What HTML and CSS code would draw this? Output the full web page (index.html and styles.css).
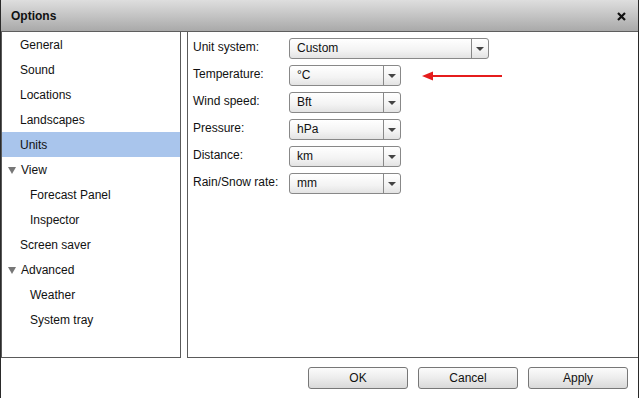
FILE: index.html
```html
<!DOCTYPE html>
<html lang="en">
<head>
    <meta charset="UTF-8">
    <meta name="viewport" content="width=device-width, initial-scale=1.0">
    <title>Options</title>
    <link rel="stylesheet" href="styles.css">
</head>
<body>
    <div class="window">
        <div class="titlebar">
            <span class="title">Options</span>
            <span class="close">
                <svg width="9" height="9" viewBox="0 0 9 9"><path d="M1 1L8 8M8 1L1 8" stroke="#111" stroke-width="2.2"/></svg>
            </span>
        </div>
        <div class="main">
            <div class="nav">
                <div class="nav-item">General</div>
                <div class="nav-item">Sound</div>
                <div class="nav-item">Locations</div>
                <div class="nav-item">Landscapes</div>
                <div class="nav-item selected">Units</div>
                <div class="nav-item group"><span class="tri"></span>View</div>
                <div class="nav-item sub">Forecast Panel</div>
                <div class="nav-item sub">Inspector</div>
                <div class="nav-item">Screen saver</div>
                <div class="nav-item group"><span class="tri"></span>Advanced</div>
                <div class="nav-item sub">Weather</div>
                <div class="nav-item sub">System tray</div>
            </div>
            <div class="content">
                <div class="row">
                    <label>Unit system:</label>
                    <div class="combo wide"><span class="value">Custom</span><span class="drop"></span></div>
                </div>
                <div class="row">
                    <label>Temperature:</label>
                    <div class="combo"><span class="value">°C</span><span class="drop"></span></div>
                    <svg class="pointer" width="82" height="10" viewBox="0 0 82 10">
                        <path d="M0 5L11 0.5V9.5Z" fill="#e51c1c"/>
                        <path d="M10 5H80" stroke="#e51c1c" stroke-width="2"/>
                    </svg>
                </div>
                <div class="row">
                    <label>Wind speed:</label>
                    <div class="combo"><span class="value">Bft</span><span class="drop"></span></div>
                </div>
                <div class="row">
                    <label>Pressure:</label>
                    <div class="combo"><span class="value">hPa</span><span class="drop"></span></div>
                </div>
                <div class="row">
                    <label>Distance:</label>
                    <div class="combo"><span class="value">km</span><span class="drop"></span></div>
                </div>
                <div class="row">
                    <label>Rain/Snow rate:</label>
                    <div class="combo"><span class="value">mm</span><span class="drop"></span></div>
                </div>
            </div>
        </div>
        <div class="footer">
            <button>OK</button>
            <button>Cancel</button>
            <button>Apply</button>
        </div>
    </div>
</body>
</html>
```

FILE: styles.css
```css
body {
    margin: 0;
    font-family: "Liberation Sans", Arial, sans-serif;
    font-size: 12px;
    color: #111;
    background-color: #ffffff;
}
.window {
    width: 637px;
    height: 398px;
    border-left: 1px solid #2a2a2a;
    border-right: 1px solid #2a2a2a;
    background-color: #ffffff;
    display: flex;
    flex-direction: column;
}
.titlebar {
    height: 31px;
    border-bottom: 1px solid #5e5e5e;
    background: linear-gradient(#dedede, #c4c4c4 50%, #a9a9a9);
    display: flex;
    align-items: center;
    justify-content: space-between;
    padding: 0 12px 0 10px;
}
.title {
    font-weight: bold;
    font-size: 12px;
    color: #111;
}
.close {
    display: flex;
    margin-top: 1px;
}
.main {
    display: flex;
    gap: 6px;
    height: 326px;
}
.nav {
    width: 178px;
    border: 1px solid #5a5a5a;
    border-top: none;
}
.nav-item {
    height: 25px;
    line-height: 24px;
    padding-left: 18px;
    display: flex;
    align-items: center;
}
.nav-item.selected {
    background-color: #a9c5ec;
}
.nav-item.sub {
    padding-left: 28px;
}
.nav-item.group {
    padding-left: 6px;
}
.tri {
    width: 0;
    height: 0;
    border-left: 4px solid transparent;
    border-right: 4px solid transparent;
    border-top: 7px solid #777;
    margin-right: 5px;
    margin-top: 1px;
}
.content {
    flex: 1;
    border-left: 1px solid #5a5a5a;
    border-bottom: 1px solid #5a5a5a;
    padding: 6px 0 0 5px;
}
.row {
    display: flex;
    align-items: flex-start;
    height: 27px;
}
.row label {
    width: 96px;
    line-height: 19px;
}
.combo {
    width: 110px;
    height: 19px;
    border: 1px solid #888;
    border-radius: 3px;
    background: linear-gradient(#ffffff, #f3f3f3 60%, #e3e3e3);
    display: flex;
}
.combo.wide {
    width: 198px;
}
.combo .value {
    flex: 1;
    padding-left: 7px;
    line-height: 19px;
    font-size: 12px;
}
.combo .drop {
    width: 16px;
    border-left: 1px solid #888;
    display: flex;
    align-items: center;
    justify-content: center;
}
.combo .drop::after {
    content: "";
    border-left: 4px solid transparent;
    border-right: 4px solid transparent;
    border-top: 4px solid #444;
}
.pointer {
    margin-left: 21px;
    margin-top: 6px;
}
.footer {
    flex: 1;
    display: flex;
    justify-content: flex-end;
    gap: 10px;
    padding: 9px 10px 0 0;
}
button {
    width: 100px;
    height: 22px;
    border: 1px solid #777;
    border-radius: 3px;
    background: linear-gradient(#fbfbfb, #ececec 50%, #d9d9d9);
    font-family: "Liberation Sans", Arial, sans-serif;
    font-size: 12px;
    color: #111;
    padding: 0;
}
```
